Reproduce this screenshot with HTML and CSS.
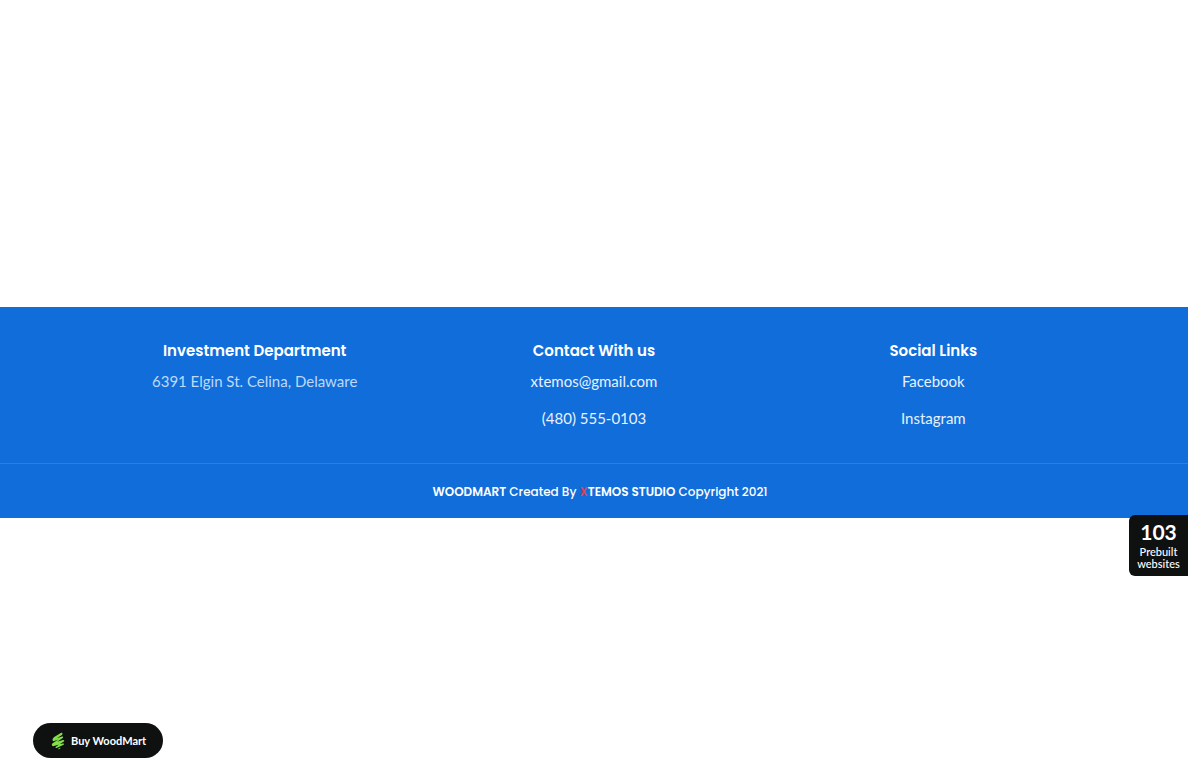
FILE: index.html
```html
<!DOCTYPE html>
<html lang="en">
<head>
  <meta charset="UTF-8" />
  <meta name="viewport" content="width=device-width, initial-scale=1.0"/>
  <title>WoodMart</title>
  <link rel="stylesheet" href="styles.css">
</head>
<body>
  <main class="content"></main>

  <footer class="footer">
    <div class="footer-columns">
      <section class="column">
        <h4>Investment Department</h4>
        <p class="address">6391 Elgin St. Celina, Delaware</p>
      </section>
      <section class="column">
        <h4>Contact With us</h4>
        <a href="mailto:xtemos@gmail.com">xtemos@gmail.com</a>
        <a href="tel:4805550103">(480) 555-0103</a>
      </section>
      <section class="column">
        <h4>Social Links</h4>
        <a href="#">Facebook</a>
        <a href="#">Instagram</a>
      </section>
    </div>
    <div class="copyright">
      <a href="#">WOODMART</a> Created By <a href="#"><span class="accent">X</span>TEMOS STUDIO</a> Copyright 2021
    </div>
  </footer>

  <a class="prebuilt" href="#">
    <strong>103</strong>
    <span>Prebuilt websites</span>
  </a>

  <a class="buy" href="#">
    <svg width="14" height="18" viewBox="0 0 14 18" fill="#83e04b" aria-hidden="true">
      <path d="M10.2.8 3.2 4.9C1.2 6.3 1 8.7 2.6 9.3L7.3 7.6 1.6 11.3C.3 12.4.7 14.2 2.2 14.2L7.9 12.4 4.7 14.9C4.2 15.7 4.8 16.3 5.6 16L12.6 12.8C13.5 12.1 12.8 11.3 12 11.5L8.8 12.1 12.9 9.6C13.8 8.8 13 7.8 12 8.1L6.1 9.8 11.8 5.9C12.7 5 11.9 4.2 11 4.5L5.8 6.3 10.9 2.9C12.1 2 11.4.3 10.2.8Z"/>
      <path d="M7.3 16.5 9.4 15.5 9.2 16.6 7.6 17.4Z"/>
    </svg>
    Buy WoodMart
  </a>
</body>
</html>
```
FILE: styles.css
```css
body {
  margin: 0;
  padding-right: 12px;
  background: #fff;
  font-family: Lato, sans-serif;
}
a {
  color: inherit;
  text-decoration: none;
}
.content {
  min-height: 307px;
}
.footer {
  background: #116dd9;
  color: #fff;
}
.footer-columns {
  display: grid;
  grid-template-columns: repeat(3, 1fr);
  max-width: 1018px;
  margin: 0 auto;
  padding: 32px 0 20px;
}
.column {
  display: flex;
  flex-direction: column;
  align-items: center;
  font-size: 15px;
  line-height: 24px;
}
.column h4 {
  margin: 0 0 6px;
  font-family: Poppins, Inter, sans-serif;
  font-size: 15px;
  font-weight: 600;
  line-height: 24px;
}
.column a {
  margin-bottom: 13px;
  color: #e8f1fc;
}
.address {
  margin: 0;
  color: #bddaf8;
}
.copyright {
  padding: 18px 0 16px 12px;
  border-top: 1px solid #2c7fe2;
  font-family: Poppins, Inter, sans-serif;
  font-size: 12px;
  font-weight: 500;
  line-height: 20px;
  text-align: center;
}
.copyright a {
  font-weight: 600;
}
.copyright .accent {
  color: #d8425c;
}
.prebuilt {
  position: fixed;
  top: 515px;
  right: 12px;
  display: flex;
  flex-direction: column;
  box-sizing: border-box;
  width: 59px;
  padding: 5px 4px 6px;
  border-radius: 6px 0 0 6px;
  background: #0f1010;
  color: #fff;
  font-size: 11px;
  font-weight: 500;
  line-height: 12px;
  text-align: center;
}
.prebuilt strong {
  margin-bottom: 2px;
  font-size: 21px;
  line-height: 24px;
}
.buy {
  position: fixed;
  bottom: 2px;
  left: 33px;
  display: flex;
  align-items: center;
  gap: 6px;
  box-sizing: border-box;
  height: 35px;
  padding: 0 17px 0 18px;
  border-radius: 18px;
  background: #0f1010;
  color: #fff;
  font-size: 11px;
  font-weight: 700;
}
```
